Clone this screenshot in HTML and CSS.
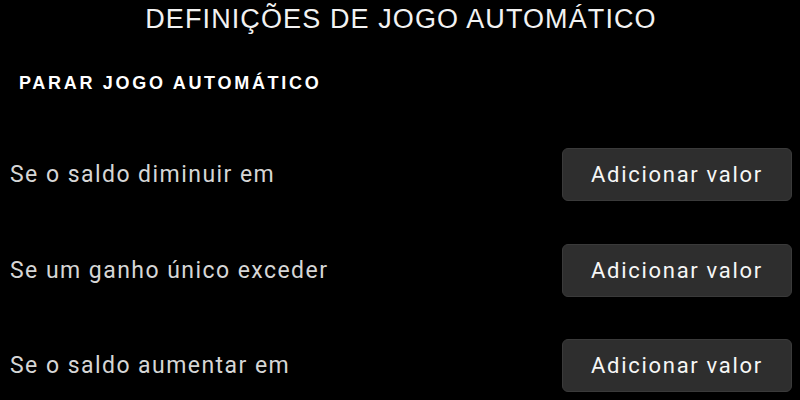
FILE: index.html
```html
<!DOCTYPE html>
<html lang="pt">
<head>
<meta charset="utf-8">
<link rel="stylesheet" href="styles.css">
</head>
<body>
<div class="page">
  <h1 class="title">DEFINIÇÕES DE JOGO AUTOMÁTICO</h1>
  <h2 class="section">PARAR JOGO AUTOMÁTICO</h2>
  <div class="rows">
    <div class="row">
      <span class="label">Se o saldo diminuir em</span>
      <button class="btn">Adicionar valor</button>
    </div>
    <div class="row">
      <span class="label">Se um ganho único exceder</span>
      <button class="btn">Adicionar valor</button>
    </div>
    <div class="row">
      <span class="label">Se o saldo aumentar em</span>
      <button class="btn">Adicionar valor</button>
    </div>
  </div>
</div>
</body>
</html>
```

FILE: styles.css
```css
html, body {
  margin: 0;
  padding: 0;
  background: #000;
  height: 100%;
  overflow: hidden;
}
.page {
  width: 800px;
  height: 400px;
  box-sizing: border-box;
  padding: 3px 8px 0 10px;
  font-family: "Liberation Sans", Arial, sans-serif;
  color: #fff;
}
.title {
  margin: 0;
  text-align: center;
  font-weight: normal;
  font-size: 27px;
  letter-spacing: 1.1px;
  line-height: 32px;
  color: #f2f2f2;
}
.section {
  margin: 37px 0 0 9px;
  font-size: 18px;
  font-weight: bold;
  letter-spacing: 2.7px;
  line-height: 22px;
  color: #fff;
}
.rows {
  display: flex;
  flex-direction: column;
  gap: 42.5px;
  margin-top: 54px;
}
.row {
  display: flex;
  align-items: center;
  justify-content: space-between;
  height: 53px;
}
.label {
  font-family: Roboto, "Liberation Sans", sans-serif;
  font-size: 23px;
  letter-spacing: 1.45px;
  color: #d6d6d6;
}
.btn {
  width: 230px;
  height: 53px;
  background: #2e2e2e;
  border: 1px solid #3a3a3a;
  border-radius: 6px;
  color: #f6f6f6;
  font-family: Roboto, "Liberation Sans", sans-serif;
  font-size: 22px;
  letter-spacing: 1.7px;
  padding: 0;
}
```
